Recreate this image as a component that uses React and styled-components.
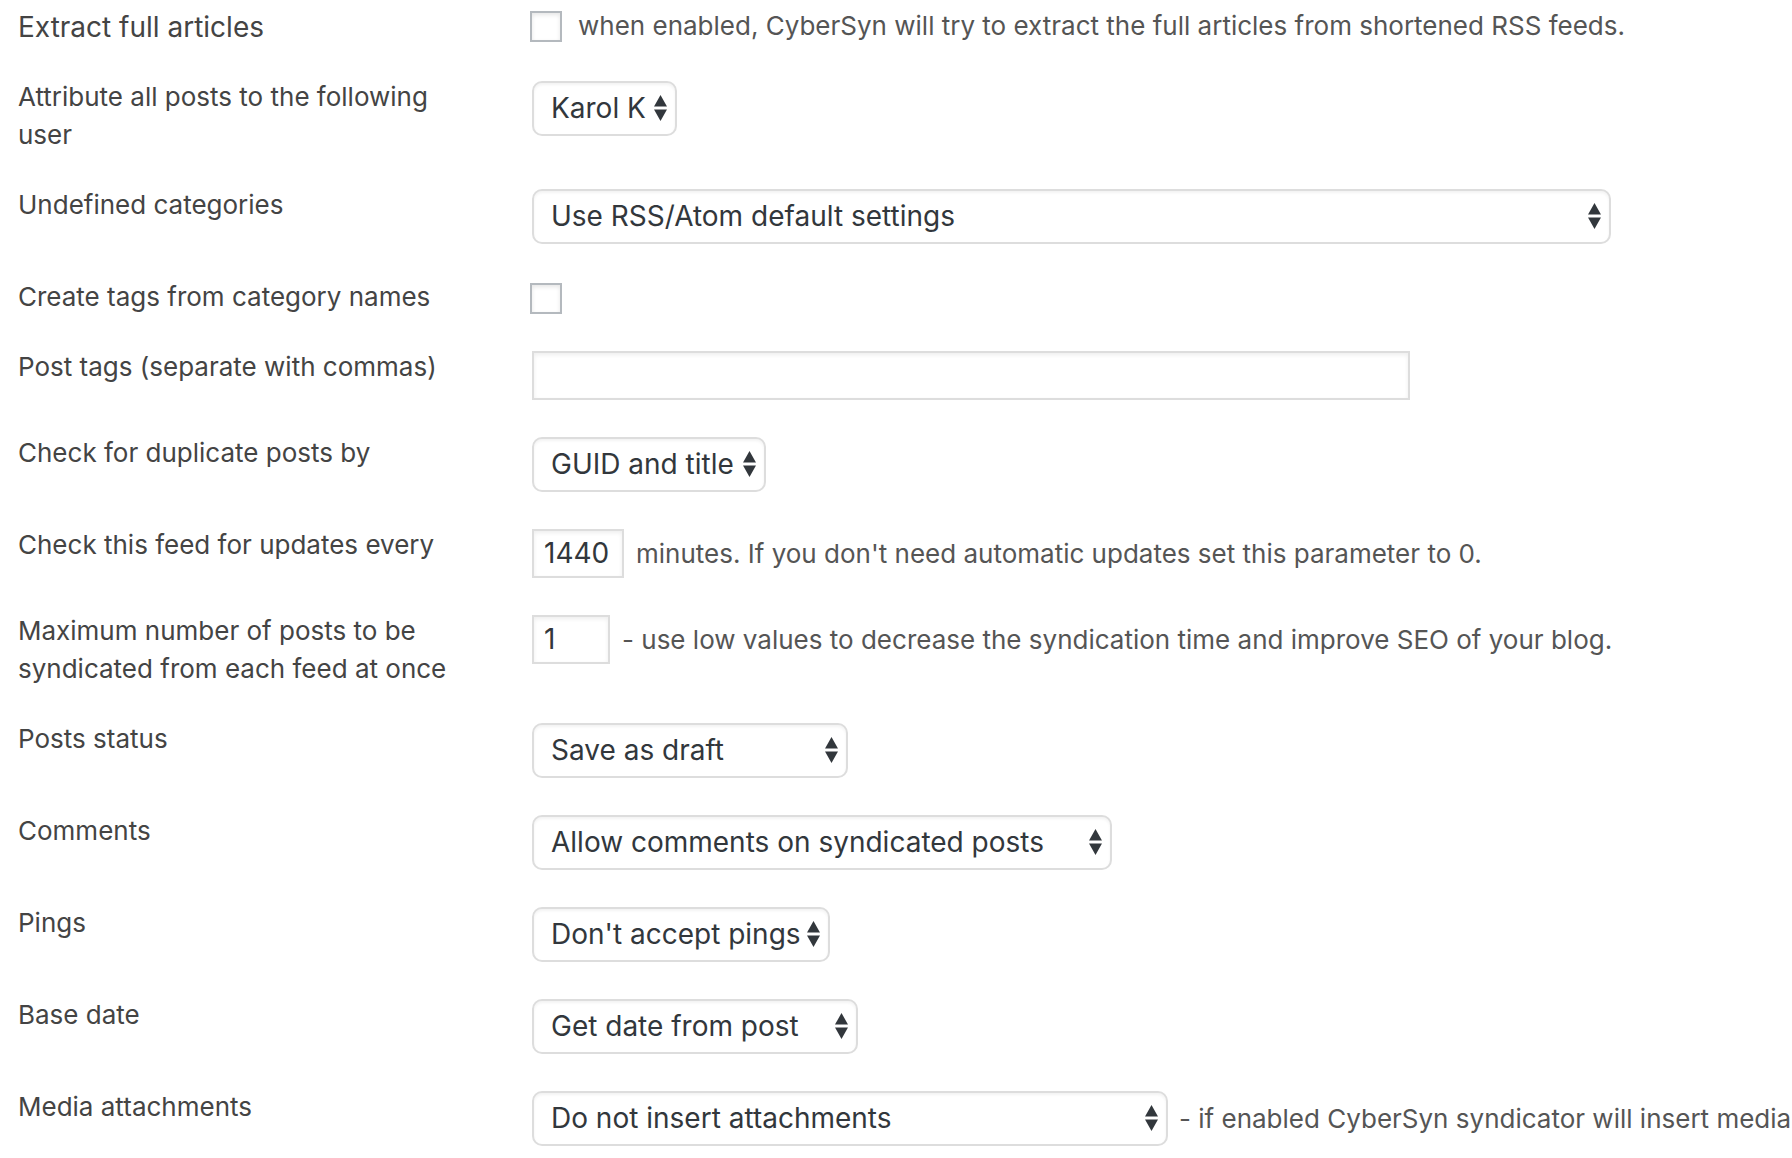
import React from "react";
import styled, { createGlobalStyle } from "styled-components";

const GlobalStyle = createGlobalStyle`
  html, body {
    margin: 0;
    padding: 0;
    background: #ffffff;
    overflow: hidden;
  }
  body {
    font-family: Inter, "Noto Sans", "Liberation Sans", sans-serif;
    color: #444444;
  }
`;

const TEXT = 26;
const CONTROL = 28;

const Page = styled.div`
  width: 1792px;
  height: 1158px;
  overflow: hidden;
  padding-left: 18px;
  box-sizing: border-box;
`;

const Table = styled.div`
  display: flex;
  flex-direction: column;
`;

const Row = styled.div`
  display: grid;
  grid-template-columns: 514px 1fr;
  align-items: start;
`;

const Label = styled.div`
  font-size: ${(p) => p.$size || TEXT}px;
  line-height: 38px;
  color: #444444;
  padding: ${(p) => (p.$first ? "8px" : "16px")} 0 16px 0;
  white-space: nowrap;
`;

const Field = styled.div`
  display: flex;
  align-items: center;
  gap: ${(p) => p.$gap || 12}px;
  padding: ${(p) => (p.$first ? "9px" : "18.5px")} 0 18.5px 0;
  white-space: nowrap;
  min-width: 0;
`;

const Note = styled.span`
  font-size: ${TEXT}px;
  color: #555555;
  line-height: 31px;
`;

const Checkbox = styled.span`
  display: inline-block;
  flex: none;
  width: 32px;
  height: 31px;
  margin: 2px 0 0 -2px;
  box-sizing: border-box;
  border: 2px solid #b4b9be;
  background: #ffffff;
  box-shadow: inset 0 2px 4px rgba(0, 0, 0, 0.1);
`;

const SelectBox = styled.div`
  display: flex;
  flex: none;
  align-items: center;
  justify-content: space-between;
  box-sizing: border-box;
  width: ${(p) => p.$w}px;
  height: 55px;
  padding: 0 8px 0 17px;
  border: 2px solid #dddddd;
  border-radius: 10px;
  background: #ffffff;
  box-shadow: inset 0 2px 3px rgba(0, 0, 0, 0.05);
  font-size: ${CONTROL}px;
  color: #32373c;
`;

const SelectText = styled.span`
  line-height: 1;
`;

const TextInput = styled.div`
  display: flex;
  flex: none;
  align-items: center;
  box-sizing: border-box;
  width: ${(p) => p.$w}px;
  height: 49px;
  padding: 0 10px;
  border: 2px solid #dddddd;
  background: #ffffff;
  box-shadow: inset 0 2px 4px rgba(0, 0, 0, 0.07);
  font-size: ${CONTROL}px;
  color: #32373c;
`;

const Arrows = () => (
  <svg width="13" height="26" viewBox="0 0 13 26" aria-hidden="true">
    <polygon points="6.5,0 13,11.5 0,11.5" fill="#32373c" />
    <polygon points="0,14.5 13,14.5 6.5,26" fill="#32373c" />
  </svg>
);

const Select = ({ w, children }) => (
  <SelectBox $w={w}>
    <SelectText>{children}</SelectText>
    <Arrows />
  </SelectBox>
);

export default function App() {
  return (
    <>
      <GlobalStyle />
      <Page>
        <Table>
          <Row>
            <Label $first $size={28}>
              Extract full articles
            </Label>
            <Field $first $gap={16}>
              <Checkbox />
              <Note>
                when enabled, CyberSyn will try to extract the full articles from
                shortened RSS feeds.
              </Note>
            </Field>
          </Row>
          <Row>
            <Label>
              Attribute all posts to the following
              <br />
              user
            </Label>
            <Field>
              <Select w={145}>Karol K</Select>
            </Field>
          </Row>
          <Row>
            <Label>Undefined categories</Label>
            <Field>
              <Select w={1079}>Use RSS/Atom default settings</Select>
            </Field>
          </Row>
          <Row>
            <Label>Create tags from category names</Label>
            <Field>
              <Checkbox />
            </Field>
          </Row>
          <Row>
            <Label>Post tags (separate with commas)</Label>
            <Field>
              <TextInput $w={878} />
            </Field>
          </Row>
          <Row>
            <Label>Check for duplicate posts by</Label>
            <Field>
              <Select w={234}>GUID and title</Select>
            </Field>
          </Row>
          <Row>
            <Label>Check this feed for updates every</Label>
            <Field>
              <TextInput $w={92}>1440</TextInput>
              <Note>
                minutes. If you don't need automatic updates set this parameter to 0.
              </Note>
            </Field>
          </Row>
          <Row>
            <Label>
              Maximum number of posts to be
              <br />
              syndicated from each feed at once
            </Label>
            <Field>
              <TextInput $w={78}>1</TextInput>
              <Note>
                - use low values to decrease the syndication time and improve SEO of
                your blog.
              </Note>
            </Field>
          </Row>
          <Row>
            <Label>Posts status</Label>
            <Field>
              <Select w={316}>Save as draft</Select>
            </Field>
          </Row>
          <Row>
            <Label>Comments</Label>
            <Field>
              <Select w={580}>Allow comments on syndicated posts</Select>
            </Field>
          </Row>
          <Row>
            <Label>Pings</Label>
            <Field>
              <Select w={298}>Don't accept pings</Select>
            </Field>
          </Row>
          <Row>
            <Label>Base date</Label>
            <Field>
              <Select w={326}>Get date from post</Select>
            </Field>
          </Row>
          <Row>
            <Label>Media attachments</Label>
            <Field $gap={11}>
              <Select w={636}>Do not insert attachments</Select>
              <Note>- if enabled CyberSyn syndicator will insert media</Note>
            </Field>
          </Row>
        </Table>
      </Page>
    </>
  );
}
